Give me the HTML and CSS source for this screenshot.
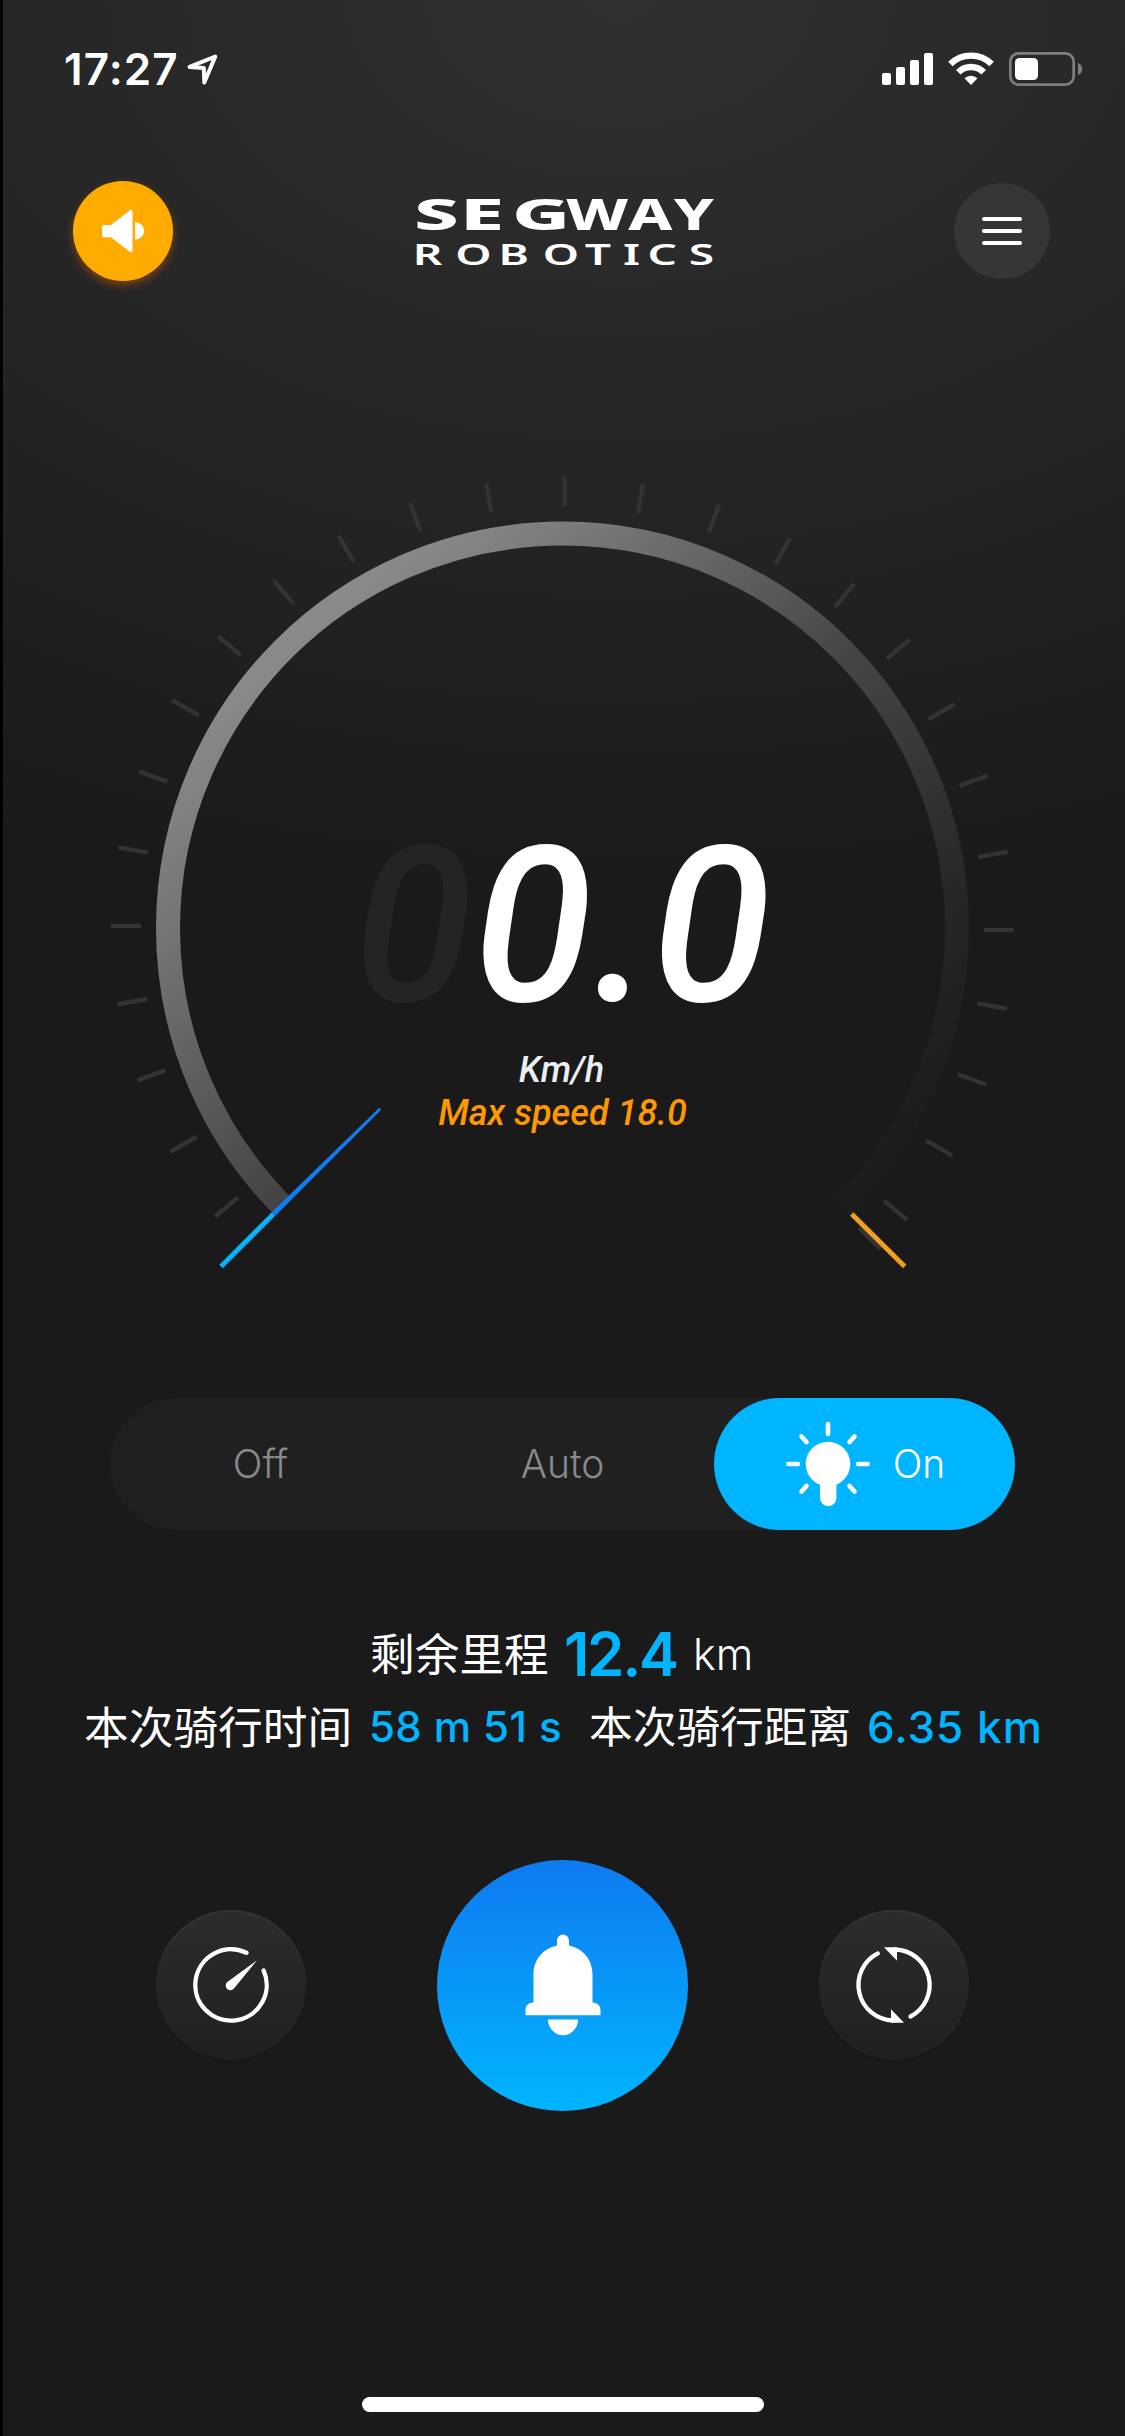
FILE: index.html
```html
<!DOCTYPE html>
<html lang="zh-CN">
<head>
<meta charset="utf-8">
<title>Segway Robotics</title>
<link rel="stylesheet" href="styles.css">
</head>
<body>
<main class="screen">
  <div class="status">
    <div class="status-left">
      <span class="time">17:27</span>
      <svg class="arrow" width="34" height="34" viewBox="0 0 34 34"><path d="M29.3 4.5 3.6 14.9l14.2 1.2.5 14.4z" fill="none" stroke="#fff" stroke-width="4" stroke-linejoin="round"/></svg>
    </div>
    <svg class="indicators" width="202" height="36" viewBox="881 51 202 36">
      <g fill="#fff">
        <rect x="882" y="73" width="9" height="12" rx="2"/><rect x="896" y="67" width="9" height="18" rx="2"/><rect x="910" y="60" width="9" height="25" rx="2"/><rect x="924" y="53" width="9" height="32" rx="2"/>
        <path d="M971 85l-6.5-6.7a9.3 9.3 0 0 1 13 0z"/>
        <rect x="1015" y="58" width="23" height="22" rx="4.5"/>
      </g>
      <path d="M950.4 64a29.5 29.5 0 0 1 41.2 0M958.3 72.2a18 18 0 0 1 25.4 0" fill="none" stroke="#fff" stroke-width="6.4"/>
      <rect x="1010.3" y="53.3" width="63.4" height="31.4" rx="8.5" fill="none" stroke="#7f7f7f" stroke-width="2.7"/>
      <path d="M1078 63c5.600 2 5.600 10 0 12z" fill="#7f7f7f"/>
    </svg>
  </div>

  <header class="header">
    <button class="round sound" aria-label="Sound">
      <svg width="100" height="100" viewBox="0 0 100 100" fill="#fff"><path d="M31 44h7L56.500 29.600q3-2 3 1.500V69q0 3.500-3 1.500L38 56.200h-7q-2 0-2-2V46q0-2 2-2zM62 41.300c12 0 12 17.200 0 17.200z"/></svg>
    </button>
    <svg class="logo" width="310" height="96" viewBox="410 183 310 96">
      <g fill="#fff" class="logo-text">
        <text class="brand" transform="translate(0 229.600) scale(1.850 1)" x="224.300 249.200 277.300">SEG</text>
        <text class="brand" transform="translate(0 229.600) scale(1.450 1)" x="391 434 465.300">WAY</text>
        <text class="sub" transform="translate(0 264.500) scale(1.650 1)" x="250.700 276.500 302.800 329.500 355 378.200 393 418">ROBOTICS</text>
      </g>
    </svg>
    <button class="round menu" aria-label="Menu"><span></span><span></span><span></span></button>
  </header>

  <section class="gauge">
    <svg class="dial" width="921" height="820" viewBox="-460.500 -460 921 820">
      <defs>
        <linearGradient id="ring" gradientUnits="userSpaceOnUse" x1="-279" y1="-279" x2="279" y2="279">
          <stop offset="0" stop-color="#fff" stop-opacity=".475"/><stop offset=".146" stop-color="#fff" stop-opacity=".4"/><stop offset=".5" stop-color="#fff" stop-opacity=".175"/><stop offset=".853" stop-color="#fff" stop-opacity=".045"/><stop offset="1" stop-color="#fff" stop-opacity=".012"/>
        </linearGradient>
      </defs>
      <path d="M-279 279A394.500 394.500 0 1 1 279 279" fill="none" stroke="url(#ring)" stroke-width="24"/>
      <g id="ticks" fill="#333"></g>
      <path d="M-341.500 338.500-289 286" stroke="#00b5ff" stroke-width="4.800"/>
      <path d="M-290.800 284.200-287.200 287.800-181.300 181.700-183.300 179.700z" fill="#0e7cf2"/>
      <path d="M289.200 286 342.200 338.500" stroke="#f19f1d" stroke-width="4.800"/>
    </svg>
    <div class="readout">
      <div class="speed"><span class="ghost">0</span>0.0</div>
      <div class="unit">Km/h</div>
      <div class="max">Max speed 18.0</div>
    </div>
  </section>

  <nav class="light">
    <span class="option">Off</span>
    <span class="option">Auto</span>
    <span class="option active">
      <svg width="88" height="88" viewBox="784 1420 88 88"><g fill="#fff"><circle cx="828" cy="1464" r="22.300"/><path d="M820 1475h16.400v23a8.200 8.200 0 0 1-16.400 0z"/></g><path d="M828 1424v10M788.300 1464h9.500M858.200 1464h9.500M801.500 1436.500l5 5.500M854.500 1436.500l-5 5.500M801.500 1491.500l5-5.500M854.500 1491.500l-5-5.500" stroke="#fff" stroke-width="4.600" stroke-linecap="round"/></svg>
      <span class="on">On</span>
    </span>
  </nav>

  <section class="stats">
    <div class="stat-row range"><span class="cjk">剩余里程</span><b class="value big">12.4</b><span class="km">km</span></div>
    <div class="stat-row trip"><span class="cjk">本次骑行时间</span><b class="value dur">58 m 51 s</b><span class="cjk small">本次骑行距离</span><b class="value dist">6.35 km</b></div>
  </section>

  <section class="actions">
    <button class="round action" aria-label="Speed">
      <svg width="100" height="100" viewBox="-50 -50 100 100"><path d="M15.500-32.200A35.700 35.700 0 1 0 32.600-14.600" fill="none" stroke="#fff" stroke-width="4.300" stroke-linecap="round"/><path d="M26-24.700-3.700-3a4.700 4.700 0 1 0 6.900 6.300z" fill="#fff"/></svg>
    </button>
    <button class="round bell" aria-label="Bell">
      <svg width="110" height="110" viewBox="507.500 1930.500 110 110" fill="#fff"><path d="M556.500 1946v-5a6 6 0 0 1 12 0v5c14 3 23.500 14 23.500 29v28c5 0 8 3 8 8v4.700h-75v-4.700c0-5 3-8 8-8v-28c0-15 9.500-26 23.500-29zM547.500 2020h30a15 15.700 0 0 1-30 0z"/></svg>
    </button>
    <button class="round action" aria-label="Sync">
      <svg width="100" height="100" viewBox="844 1936 100 100"><g fill="none" stroke="#fff" stroke-width="4.300" stroke-linecap="round"><path d="M895 1950.500A35.500 35.500 0 0 1 910.500 2017.500"/><path d="M893 2021.500A35.500 35.500 0 0 1 877.800 1954.400"/></g><path d="M884 1948.300h13v13.500zM904 2023.700h-13v-13.500z" fill="#fff"/></svg>
    </button>
  </section>

  <div class="home"></div>
</main>
<script src="ticks.js"></script>
</body>
</html>
```
FILE: ticks.js
```js
// Scale marks every 10 degrees, plus one at the end of the dial.
const marks = document.getElementById('ticks');
const angles = [];
for (let a = -130; a <= 130; a += 10) angles.push(a);
angles.push(135);
for (const a of angles) {
  const r = document.createElementNS('http://www.w3.org/2000/svg', 'rect');
  r.setAttribute('y', -451.5);
  r.setAttribute('width', 4.4);
  r.setAttribute('height', 30);
  r.setAttribute('transform', `rotate(${a})`);
  marks.appendChild(r);
}
```
FILE: styles.css
```css
* { box-sizing: border-box; }
body { margin: 0; background: #1a1a1a; }
button { border: 0; padding: 0; }
svg { display: block; }
.screen {
  width: 1125px; height: 2436px; overflow: hidden;
  display: flex; flex-direction: column; align-items: center;
  color: #fff; font-family: Inter, "Noto Sans CJK SC", sans-serif;
  background: radial-gradient(ellipse 1400px 920px at 620px 0, #303030, #1a1a1a);
  box-shadow: inset 3px 0 #000;
}
.status {
  width: 100%; height: 138px; padding: 0 42px 0 64px;
  display: flex; justify-content: space-between; align-items: center;
}
.status-left { display: flex; align-items: center; gap: 9px; }
.time { width: 113px; font-size: 44px; font-weight: 600; line-height: 54px; letter-spacing: 1.1px; white-space: nowrap; }
.header {
  width: 100%; height: 186px; padding: 0 75px 0 73px;
  display: flex; justify-content: space-between; align-items: center;
}
.round { border-radius: 50%; display: flex; align-items: center; justify-content: center; }
.sound { width: 100px; height: 100px; background: #ffab00; box-shadow: 0 4px 9px rgba(255, 110, 0, .4); }
.logo { overflow: visible; }
.logo-text { font-family: "Noto Sans", sans-serif; }
.brand { font-size: 43px; font-weight: 800; }
.sub { font-size: 28px; font-weight: 600; }
.menu { width: 96px; height: 96px; background: #363636; flex-direction: column; gap: 8px; }
.menu span { width: 40px; height: 4px; border-radius: 2px; background: #fff; }
.gauge { display: grid; margin-top: 143.5px; justify-items: center; }
.dial, .readout { grid-area: 1 / 1; }
.readout {
  padding-top: 335px; text-align: center;
  font-family: Roboto, sans-serif; font-style: italic; font-weight: 500;
}
.speed { font-size: 216px; line-height: 247px; letter-spacing: .7px; padding-top: 1px; margin-bottom: -2px; }
.ghost { color: #242424; }
.unit, .max { font-size: 36px; line-height: 43px; }
.unit { color: #eceff1; margin-left: -2px; }
.max { color: #ff9800; }
.light {
  width: 905px; height: 132px; margin-top: 110px; border-radius: 66px; background: #202020;
  display: grid; grid-template-columns: 302px 302px 301px;
}
.option {
  display: flex; align-items: center; justify-content: center;
  font-size: 39px; font-weight: 350; color: #8a8a8a; padding-right: 1px;
}
.active { background: #00b5ff; color: #fff; border-radius: 66px; gap: 21px; padding: 0; }
.stats { margin-top: 87.5px; width: 100%; }
.stat-row { display: grid; white-space: nowrap; align-items: start; line-height: 74px; }
.range { grid-template-columns: 194px 129px 100px; padding-left: 370px; height: 73px; }
.trip { grid-template-columns: 285px 220px 278px 200px; padding-left: 84px; height: 74px; }
.cjk { font-size: 44.700px; font-weight: 400; font-family: "Noto Sans CJK SC", sans-serif; line-height: 69px; }
.small { font-size: 43.700px; }
.value { color: #00b5ff; font-weight: 500; }
.big { font-size: 60px; font-weight: 600; letter-spacing: -2.300px; }
.km { font-size: 43px; font-weight: 350; }
.dur { font-size: 42px; letter-spacing: .4px; }
.dist { font-size: 44px; letter-spacing: 1px; }
.actions {
  width: 813px; margin-top: 95.5px;
  display: flex; justify-content: space-between; align-items: center;
}
.action { width: 150px; height: 150px; background: linear-gradient(#2c2c2e, #202021); box-shadow: inset 0 2px 1px #343434, 0 1px 1px #141414; }
.bell { width: 251px; height: 251px; background: linear-gradient(#0f7af0, #00b5ff); }
.home { width: 402px; height: 15px; margin: auto 0 24px; border-radius: 8px; background: #fff; }
```
